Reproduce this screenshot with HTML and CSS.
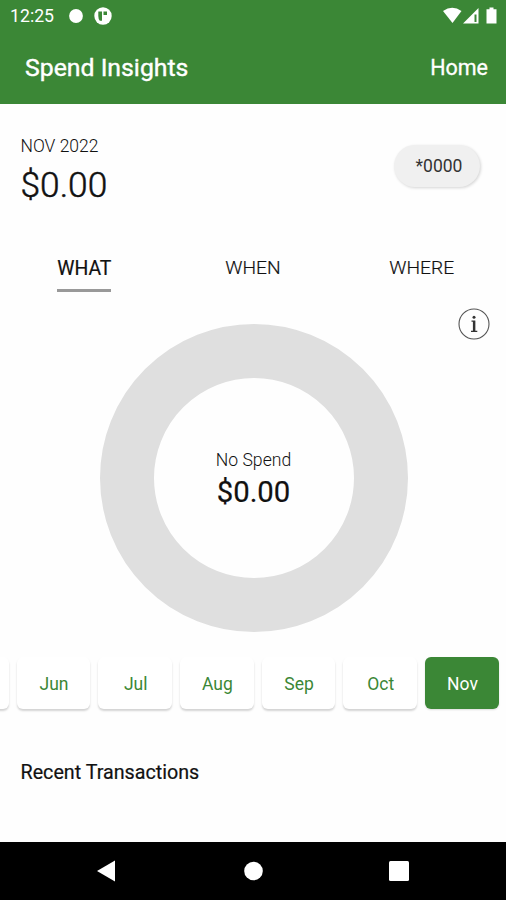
FILE: index.html
```html
<!DOCTYPE html>
<html lang="en">
<head>
<meta charset="utf-8">
<title>Spend Insights</title>
<link rel="stylesheet" href="styles.css">
</head>
<body>
<div class="screen">
  <header class="top">
    <div class="status">
      <span class="clock">12:25</span>
      <svg class="notice" width="16" height="16" viewBox="0 0 16 16"><circle cx="8" cy="8" r="6.900" fill="#fff"/></svg>
      <svg class="app-badge" width="18" height="18" viewBox="0 0 18 18">
        <circle cx="9" cy="9" r="8.700" fill="#fff"/>
        <path d="M4.300 4.500h3.700v9.300H5.800Q4.300 12 4.300 9zM9.500 4.500H13v3.500H9.500z" fill="#3b8736"/>
      </svg>
      <svg class="signals" width="56" height="18" viewBox="0 0 56 18">
        <path d="M0 4Q9.200-2.500 18.500 4L9.500 16z" fill="#fff"/>
        <path d="M20 16.500L35.500 1v15.500z" fill="#fff"/>
        <path d="M31.500 7.500h2v7.500h-2z" fill="#3b8736"/>
        <path d="M46.500 0.500h4v1.700h3v14.300h-10V2.200h3z" fill="#fff"/>
      </svg>
    </div>
    <div class="bar">
      <h1 class="title">Spend Insights</h1>
      <a class="home">Home</a>
    </div>
  </header>
  <main class="content">
    <section class="summary">
      <div>
        <div class="month">NOV 2022</div>
        <div class="total">$0.00</div>
      </div>
      <div class="account">*0000</div>
    </section>
    <nav class="tabs">
      <div class="tab"><span class="label active">WHAT</span></div>
      <div class="tab"><span class="label">WHEN</span></div>
      <div class="tab"><span class="label">WHERE</span></div>
    </nav>
    <section class="chart">
      <div class="donut">
        <div class="caption">No Spend</div>
        <div class="amount">$0.00</div>
      </div>
      <svg class="info" width="32" height="32" viewBox="0 0 32 32">
        <circle cx="16" cy="16" r="15" fill="none" stroke="#555" stroke-width="1.100"/>
        <circle cx="16" cy="9.300" r="1.500" fill="#333"/>
        <path d="M13.500 13.200h3.200v9.800M13 23.400h6.300" fill="none" stroke="#333" stroke-width="1.200"/>
        <path d="M16 13v10" stroke="#333" stroke-width="2.200"/>
      </svg>
    </section>
    <div class="months">
      <div class="chip"></div>
      <div class="chip">Jun</div>
      <div class="chip">Jul</div>
      <div class="chip">Aug</div>
      <div class="chip">Sep</div>
      <div class="chip">Oct</div>
      <div class="chip current">Nov</div>
    </div>
    <h2 class="recent">Recent Transactions</h2>
  </main>
  <footer class="nav">
    <svg width="20" height="22" viewBox="0 0 20 22"><path d="M0 11L18 0.500v21z" fill="#fff"/></svg>
    <svg width="20" height="20" viewBox="0 0 20 20"><circle cx="10.500" cy="10" r="9.300" fill="#fff"/></svg>
    <svg width="20" height="20" viewBox="0 0 20 20"><rect width="20" height="20" rx="1.500" fill="#fff"/></svg>
  </footer>
</div>
</body>
</html>
```
FILE: styles.css
```css
* { box-sizing: border-box; }
body { margin: 0; font-family: Roboto, sans-serif; color: #111; }
.screen { width: 506px; height: 900px; display: flex; flex-direction: column; overflow: hidden; background: #fefefe; }
.top { height: 104px; flex: none; background: #3b8736; color: #fff; }
.status { height: 32px; display: flex; align-items: center; padding: 0 7px 0 10px; }
.clock { width: 58px; font-size: 17.7px; }
.app-badge { margin-left: 10px; }
.signals { margin-left: auto; }
.bar { height: 72px; display: flex; align-items: center; justify-content: space-between; padding: 0 18px 1px 25px; }
.title { margin: 0; font-size: 24.8px; font-weight: 450; -webkit-text-stroke: 0.4px #fff; }
.home { font-size: 21.5px; font-weight: 450; -webkit-text-stroke: 0.3px #fff; }
.content { flex: 1; }
.summary { height: 132px; display: flex; justify-content: space-between; padding: 31px 26px 0 20.5px; }
.month { font-size: 17.5px; line-height: 22px; font-weight: 300; }
.total { font-size: 35.3px; line-height: 42px; margin-top: 7px; font-weight: 300; -webkit-text-stroke: 0.5px #111; }
.account { width: 86px; height: 42px; margin-top: 10px; padding-left: 4px; border-radius: 21px; background: #f0f0f0; box-shadow: 1px 1px 3px #d4d4d4; font-size: 17.5px; display: flex; align-items: center; justify-content: center; color: #333; }
.tabs { display: flex; height: 72px; }
.tab { flex: 1; text-align: center; padding-top: 20px; }
.label { display: inline-block; height: 36px; line-height: 24px; font-size: 19.2px; font-weight: 300; -webkit-text-stroke: 0.2px #111; }
.active { font-size: 19.4px; line-height: 25px; font-weight: 400; border-bottom: 3px solid #999; }
.chart { height: 349px; display: flex; justify-content: center; position: relative; padding: 16.4px 0 0 1px; }
.donut { width: 308px; height: 308px; border: 54px solid #dfdfdf; border-radius: 50%; display: flex; flex-direction: column; align-items: center; justify-content: center; }
.caption { font-size: 17.6px; line-height: 24px; font-weight: 300; }
.amount { font-size: 29.3px; line-height: 34px; margin-top: 3px; font-weight: 400; -webkit-text-stroke: 0.2px #111; }
.info { position: absolute; top: 0; right: 16px; }
.months { display: flex; gap: 8px; margin-left: -65px; height: 52px; }
.chip { width: 73.7px; height: 52px; flex: none; border-radius: 6px; background: #fff; box-shadow: 0 2px 2px #d4d4d4; display: flex; align-items: center; justify-content: center; color: #3b8736; font-size: 17.5px; padding: 1px 0 0 1px; }
.current { background: #3b8736; color: #fff; font-weight: 450; box-shadow: 0 1px 2px #ddd; }
.recent { margin: 51px 0 0 20.5px; font-size: 19.7px; line-height: 26px; font-weight: 400; -webkit-text-stroke: 0.2px #111; }
.nav { height: 58px; flex: none; background: #000; display: flex; align-items: center; justify-content: space-between; padding: 0 97px; }
```
